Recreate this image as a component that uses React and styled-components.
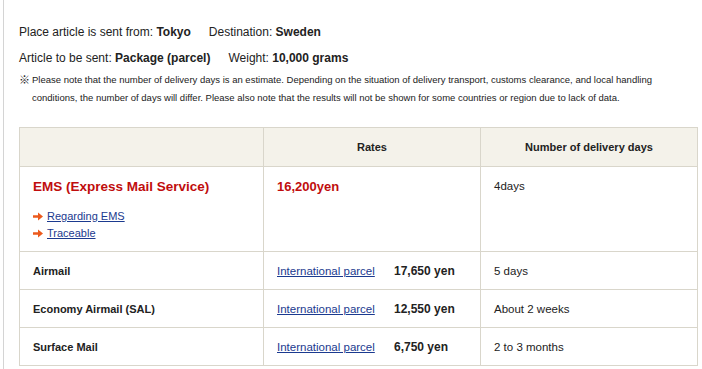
import React from "react";
import styled, { createGlobalStyle } from "styled-components";

const GlobalStyle = createGlobalStyle`
  html, body {
    margin: 0;
    padding: 0;
    background: #fff;
  }
  body {
    font-family: "Liberation Sans", Arial, "Noto Sans CJK JP", sans-serif;
    color: #222;
  }
`;

const Page = styled.div`
  margin-left: 3px;
  border-left: 1px solid #d4d4d4;
  min-height: 369px;
  padding: 25px 4px 0 15px;
  box-sizing: border-box;
`;

const InfoLine = styled.p`
  margin: 0 0 12px;
  font-size: 12px;
  line-height: 14px;

  b {
    font-weight: bold;
    margin-right: 18px;
  }
`;

const Note = styled.div`
  display: flex;
  gap: 2px;
  font-size: 9.5px;
  line-height: 18px;
  margin-top: -6px;
  margin-bottom: 20px;
  color: #222;

  span:first-child {
    flex: none;
    font-size: 11px;
  }
`;

const Table = styled.table`
  width: 679px;
  border-collapse: collapse;
  font-size: 11px;

  th,
  td {
    border: 1px solid #d9d6cb;
    padding: 0 13px;
    text-align: left;
    vertical-align: middle;
  }

  th {
    background: #f4f2ea;
    height: 38px;
    text-align: center;
    font-weight: bold;
  }
`;

const Row = styled.tr`
  td {
    height: ${(p) => (p.$tall ? "71px" : "37px")};
    vertical-align: ${(p) => (p.$tall ? "top" : "middle")};
    padding-top: ${(p) => (p.$tall ? "13px" : "0")};
  }
`;

const ServiceName = styled.td`
  font-weight: bold;
  width: 217px;
`;

const EmsTitle = styled.div`
  color: #c00d0d;
  font-weight: bold;
  font-size: 13.5px;
  line-height: 14px;
  margin-bottom: 14px;
`;

const ArrowLink = styled.div`
  display: flex;
  align-items: center;
  gap: 4px;
  line-height: 17px;
`;

const Link = styled.a`
  color: #1b3a8f;
  text-decoration: underline;
  cursor: pointer;
`;

const EmsPrice = styled.div`
  color: #c00d0d;
  font-weight: bold;
  font-size: 13px;
  line-height: 14px;
`;

const RateCell = styled.td`
  width: 190px;
`;

const RateInner = styled.div`
  display: flex;
  align-items: center;
`;

const RateLink = styled(Link)`
  width: 117px;
  flex: none;
  font-size: 11.5px;
`;

const Price = styled.span`
  font-weight: bold;
  font-size: 12px;
`;

const DaysCell = styled.td`
  font-size: 11.5px;
`;

function Arrow() {
  return (
    <svg width="10" height="9" viewBox="0 0 10 9">
      <path d="M0 3.2h5V0.5L10 4.5 5 8.5V5.8H0z" fill="#ec5a1c" />
    </svg>
  );
}

const rows = [
  { name: "Airmail", price: "17,650 yen", days: "5 days" },
  { name: "Economy Airmail (SAL)", price: "12,550 yen", days: "About 2 weeks" },
  { name: "Surface Mail", price: "6,750 yen", days: "2 to 3 months" },
];

export default function App() {
  return (
    <>
      <GlobalStyle />
      <Page>
        <InfoLine>
          Place article is sent from: <b>Tokyo</b>Destination: <b>Sweden</b>
        </InfoLine>
        <InfoLine>
          Article to be sent: <b>Package (parcel)</b>Weight: <b>10,000 grams</b>
        </InfoLine>
        <Note>
          <span>※</span>
          <span>
            Please note that the number of delivery days is an estimate. Depending on the situation of
            delivery transport, customs clearance, and local handling conditions, the number of days
            will differ. Please also note that the results will not be shown for some countries or
            region due to lack of data.
          </span>
        </Note>
        <Table>
          <thead>
            <tr>
              <th></th>
              <th>Rates</th>
              <th>Number of delivery days</th>
            </tr>
          </thead>
          <tbody>
            <Row $tall>
              <td>
                <EmsTitle>EMS (Express Mail Service)</EmsTitle>
                <ArrowLink>
                  <Arrow />
                  <Link>Regarding EMS</Link>
                </ArrowLink>
                <ArrowLink>
                  <Arrow />
                  <Link>Traceable</Link>
                </ArrowLink>
              </td>
              <td>
                <EmsPrice>16,200yen</EmsPrice>
              </td>
              <DaysCell>4days</DaysCell>
            </Row>
            {rows.map((r) => (
              <Row key={r.name}>
                <ServiceName>{r.name}</ServiceName>
                <RateCell>
                  <RateInner>
                    <RateLink>International parcel</RateLink>
                    <Price>{r.price}</Price>
                  </RateInner>
                </RateCell>
                <DaysCell>{r.days}</DaysCell>
              </Row>
            ))}
          </tbody>
        </Table>
      </Page>
    </>
  );
}
